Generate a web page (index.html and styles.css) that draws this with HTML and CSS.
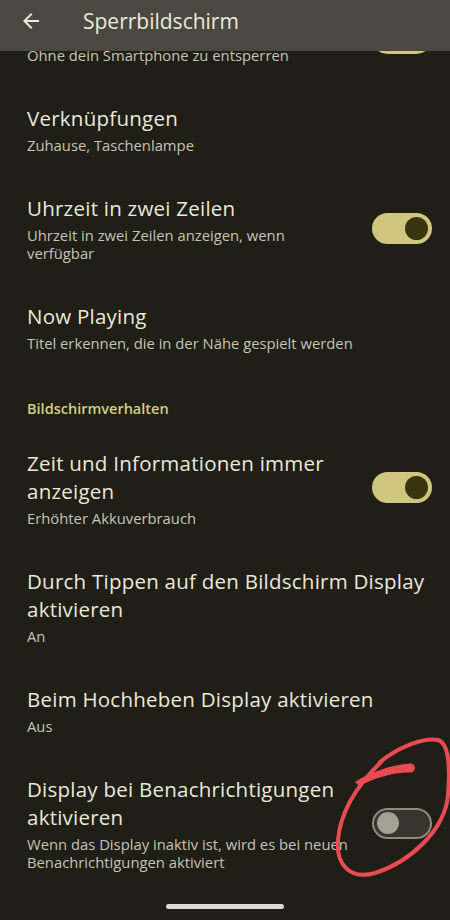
FILE: index.html
```html
<!DOCTYPE html>
<html lang="de">
<head>
<meta charset="utf-8">
<title>Sperrbildschirm</title>
<link rel="stylesheet" href="styles.css">
</head>
<body>
<div class="screen">
  <header class="appbar">
    <div class="appbar-row">
      <span class="back">
        <svg width="24" height="24" viewBox="0 0 24 24"><path d="M20 11H7.83l5.59-5.59L12 4l-8 8 8 8 1.41-1.41L7.83 13H20v-2z" fill="#ece8dc"/></svg>
      </span>
      <h1 class="title">Sperrbildschirm</h1>
    </div>
  </header>
  <main class="content">
    <div class="row row-partial">
      <div class="text"><div class="sub first">Ohne dein Smartphone zu entsperren</div></div>
      <span class="switch on partial-switch"><span class="thumb"></span></span>
    </div>
    <div class="row">
      <div class="text">
        <div class="label">Verknüpfungen</div>
        <div class="sub">Zuhause, Taschenlampe</div>
      </div>
    </div>
    <div class="row">
      <div class="text">
        <div class="label">Uhrzeit in zwei Zeilen</div>
        <div class="sub">Uhrzeit in zwei Zeilen anzeigen, wenn verfügbar</div>
      </div>
      <span class="switch on"><span class="thumb"></span></span>
    </div>
    <div class="row">
      <div class="text">
        <div class="label">Now Playing</div>
        <div class="sub">Titel erkennen, die in der Nähe gespielt werden</div>
      </div>
    </div>
    <div class="category">Bildschirmverhalten</div>
    <div class="row">
      <div class="text">
        <div class="label">Zeit und Informationen immer anzeigen</div>
        <div class="sub">Erhöhter Akkuverbrauch</div>
      </div>
      <span class="switch on"><span class="thumb"></span></span>
    </div>
    <div class="row">
      <div class="text">
        <div class="label">Durch Tippen auf den Bildschirm Display aktivieren</div>
        <div class="sub">An</div>
      </div>
    </div>
    <div class="row">
      <div class="text">
        <div class="label">Beim Hochheben Display aktivieren</div>
        <div class="sub">Aus</div>
      </div>
    </div>
    <div class="row">
      <div class="text">
        <div class="label">Display bei Benachrichtigungen aktivieren</div>
        <div class="sub">Wenn das Display inaktiv ist, wird es bei neuen Benachrichtigungen aktiviert</div>
      </div>
      <span class="switch off"><span class="thumb"></span></span>
    </div>
  </main>
  <div class="gesture"><span class="handle"></span></div>
  <svg class="scribble" width="450" height="920" viewBox="0 0 450 920">
    <path d="M380 762 C400 746 425 737 438 740 C450 744 450 770 448 795 C445 830 410 862 375 873 C350 880 336 865 338 840 C340 815 352 790 382 761" fill="none" stroke="#ea4a52" stroke-width="4" stroke-linecap="round"/>
    <path d="M355 782 C372 771 392 765 410 763.5 A4.5 4.5 0 0 1 411 772.5 C393 772 375 778 359 786 Z" fill="#ea4a52"/>
  </svg>
</div>
</body>
</html>
```
FILE: styles.css
```css
* { box-sizing: border-box; }
html, body { margin: 0; padding: 0; }
body {
  background: #1f1e17;
  font-family: "Open Sans", "Noto Sans", sans-serif;
  color: #e8e4d8;
}
.screen {
  position: relative;
  width: 450px;
  height: 920px;
  display: flex;
  flex-direction: column;
  overflow: hidden;
  background: #1f1e17;
}
.appbar {
  height: 51px;
  flex: none;
  background: #4a4841;
}
.appbar-row {
  height: 42px;
  display: flex;
  align-items: center;
}
.back {
  width: 62px;
  padding-left: 19px;
  display: flex;
  align-items: center;
}
.title {
  margin: 0 0 0 21px;
  font-size: 21px;
  font-weight: 400;
  color: #ece8dc;
}
.content {
  flex: 1;
  overflow: hidden;
  display: flex;
  flex-direction: column;
}
.row {
  display: flex;
  align-items: center;
  padding: 20px 18px 19.5px 27px;
  gap: 20px;
}
.row-partial {
  margin-top: -48.5px;
  align-items: flex-end;
}
.partial-switch { margin-bottom: 10.5px; }
.text { flex: 1; min-width: 0; }
.label {
  font-size: 20.5px;
  letter-spacing: 0.24px;
  line-height: 28px;
  color: #ebe7db;
}
.sub {
  margin-top: 4px;
  font-size: 14.8px;
  line-height: 18.5px;
  color: #c7c3b6;
}
.sub.first { margin-top: 0; }
.category {
  padding: 27px 27px 9.5px;
  font-size: 14.5px;
  line-height: 20px;
  font-weight: 600;
  color: #d6cd82;
}
.switch {
  flex: none;
  width: 60px;
  height: 31px;
  border-radius: 16px;
  display: flex;
  align-items: center;
  padding: 0 4px;
}
.switch .thumb {
  width: 23px;
  height: 23px;
  border-radius: 50%;
}
.switch.on { background: #cfc67f; justify-content: flex-end; }
.switch.on .thumb { background: #3a3510; }
.switch.off { background: #37352d; border: 2px solid #8d8a7e; padding: 0 3px; }
.switch.off .thumb { background: #a4a194; width: 22px; height: 22px; }
.gesture {
  height: 28px;
  flex: none;
  display: flex;
  align-items: center;
  justify-content: center;
}
.handle {
  width: 118px;
  height: 5px;
  border-radius: 3px;
  background: #dcd9d0;
}
.scribble {
  position: absolute;
  left: 0;
  top: 0;
  pointer-events: none;
}
```
